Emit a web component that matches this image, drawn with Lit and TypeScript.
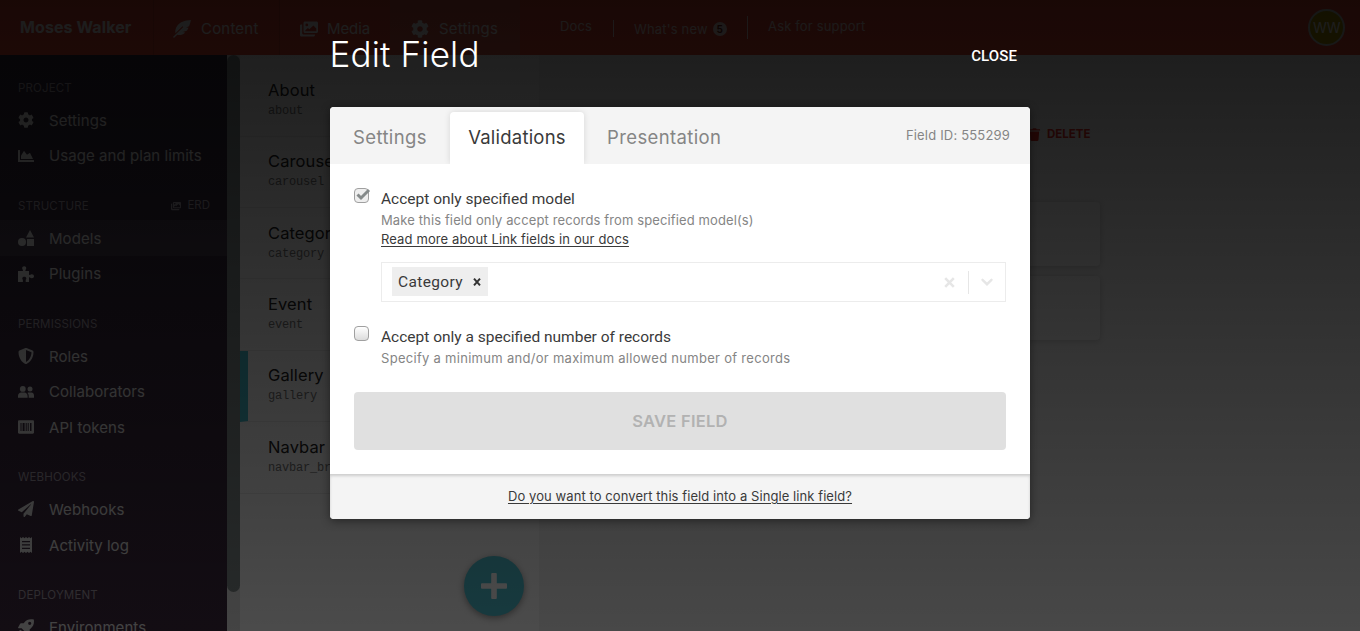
import { LitElement, html, css, svg } from "lit";

const ICONS: Record<string, { box: string; body: unknown }> = {
  cog: {
    box: "0 0 512 512",
    body: svg`<path d="M487.4 315.7l-42.6-24.6c4.3-23.2 4.3-47 0-70.2l42.6-24.6c4.9-2.8 7.1-8.6 5.5-14-11.1-35.6-30-67.8-54.7-94.6-3.8-4.1-10-5.1-14.8-2.3L380.8 110c-17.9-15.4-38.5-27.3-60.8-35.1V25.8c0-5.6-3.9-10.5-9.4-11.7-36.7-8.2-74.3-7.8-109.2 0-5.5 1.2-9.4 6.1-9.4 11.7V75c-22.2 7.9-42.8 19.8-60.8 35.1L88.7 85.5c-4.9-2.8-11-1.9-14.8 2.3-24.7 26.7-43.6 58.9-54.7 94.6-1.7 5.4.6 11.2 5.5 14L67.3 221c-4.3 23.2-4.3 47 0 70.2l-42.6 24.6c-4.9 2.8-7.1 8.6-5.5 14 11.1 35.6 30 67.8 54.7 94.6 3.8 4.1 10 5.1 14.8 2.3l42.6-24.6c17.9 15.4 38.5 27.3 60.8 35.1v49.2c0 5.6 3.9 10.5 9.4 11.7 36.7 8.2 74.3 7.8 109.2 0 5.5-1.2 9.4-6.1 9.4-11.7v-49.2c22.2-7.9 42.8-19.8 60.8-35.1l42.6 24.6c4.9 2.8 11 1.9 14.8-2.3 24.7-26.7 43.6-58.9 54.7-94.6 1.5-5.5-.7-11.3-5.6-14.1zM256 336c-44.1 0-80-35.9-80-80s35.9-80 80-80 80 35.9 80 80-35.9 80-80 80z"/>`,
  },
  plane: {
    box: "0 0 512 512",
    body: svg`<path d="M476 3.2L12.5 270.6c-18.1 10.4-15.8 35.6 2.2 43.2L121 358.4l287.3-253.2c5.5-4.9 13.3 2.6 8.6 8.3L176 407v80.5c0 23.6 28.5 32.9 42.5 15.8L282 426l124.6 52.2c14.2 6 30.4-2.9 33-18.2l72-432C515 7.8 493.3-6.8 476 3.2z"/>`,
  },
  shield: {
    box: "0 0 512 512",
    body: svg`<path d="M466.5 83.7l-192-80a48.15 48.15 0 0 0-36.9 0l-192 80C27.7 91.1 16 108.6 16 128c0 198.5 114.5 335.7 221.5 380.3 11.8 4.9 25.1 4.9 36.9 0C360.1 472.6 496 349.3 496 128c0-19.4-11.7-36.9-29.5-44.3zM256.1 446.3l-.1-381 175.9 73.3c-3.3 151.4-82.1 261.1-175.8 307.7z"/>`,
  },
  chart: {
    box: "0 0 512 512",
    body: svg`<path d="M500 384c6.6 0 12 5.4 12 12v40c0 6.6-5.4 12-12 12H12c-6.6 0-12-5.4-12-12V76c0-6.6 5.4-12 12-12h40c6.6 0 12 5.4 12 12v308h436zM372.7 159.5L288 216l-85.3-113.7c-5.1-6.8-15.5-6.3-19.9 1L96 248v104h384l-89.9-187.8c-3.2-6.5-11.4-8.7-17.4-4.7z"/>`,
  },
  shapes: {
    box: "0 0 16 16",
    body: svg`<path d="M12 0 16 7.5H8zM9 9h7v7H9z"/><circle cx="4" cy="12" r="4"/>`,
  },
  puzzle: {
    box: "0 0 16 16",
    body: svg`<path d="M0 5h4.6c.5 0 .6-.5.3-.9C4.300 3.300 4.200 2.700 4.200 2.200 4.200 1 5 .3 6.200.3S8.200 1 8.200 2.200c0 .5-.1 1.100-.7 1.900-.3.4-.2.9.3.9H11v3.600c0 .5.500.6.9.3.700-.5 1.200-.7 1.900-.7 1.300 0 2.200.8 2.200 2s-.9 2-2.200 2c-.7 0-1.200-.2-1.900-.7-.4-.3-.9-.2-.9.300V16H7.700v-2c0-.5.600-.8.600-1.600 0-1-.8-1.700-2-1.700s-2 .7-2 1.700c0 .8.600 1.100.600 1.600v2H0z"/>`,
  },
  users: {
    box: "0 0 16 16",
    body: svg`<circle cx="4.800" cy="4.900" r="2.900"/><circle cx="12" cy="5" r="2.500"/><path d="M0 13.700v-1.600C0 10 1.500 8.600 3.200 8.600h3.200c1.700 0 3.200 1.400 3.200 3.500v1.600zM10.700 13.700v-1.900c0-1.200-.4-2.200-1.200-2.900.5-.2.900-.3 1.400-.3h2.400c1.600 0 2.700 1.200 2.700 2.800v2.300z"/>`,
  },
  barcode: {
    box: "0 0 16 16",
    body: svg`<path fill-rule="evenodd" d="M1.200 1.300h13.600c.7 0 1.200.5 1.200 1.200v11c0 .7-.5 1.200-1.200 1.200H1.200C.5 14.700 0 14.200 0 13.500v-11c0-.7.5-1.200 1.200-1.200zM2.500 4v8h1V4zM4.600 4v8h2V4zM7.700 4v8h1V4zM9.700 4v8h1V4zM12 4v8h1.500V4z"/>`,
  },
  receipt: {
    box: "0 0 16 16",
    body: svg`<path fill-rule="evenodd" d="M2 0l1.500 1.200L5 0l1.500 1.200L8 0l1.500 1.200L11 0l1.500 1.200L14 0v16l-1.500-1.200L11 16l-1.500-1.200L8 16l-1.500-1.200L5 16l-1.500-1.200L2 16zM4 4v1.300h8V4zM4 7.300v1.300h8V7.300zM4 10.700V12h8v-1.300z"/>`,
  },
  rocket: {
    box: "0 0 16 16",
    body: svg`<path fill-rule="evenodd" d="M15.800.6c-4-.9-7.200-.1-9.500 2.900L5.700 4.300H3c-.4 0-.8.2-1 .6L.1 8.500c-.2.400 0 .8.500.8h3l3.100 3.100v3c0 .5.400.7.8.500l3.600-1.900c.4-.2.6-.6.6-1v-2.700l.8-.6c3-2.300 3.900-5.600 3.300-9.100zM11.700 5.900a1.600 1.600 0 1 1 0-3.200 1.600 1.600 0 0 1 0 3.200zM.2 16c-.3-2.500.5-4.700 2.500-5.200l2.500 2.500C4.700 15.200 2.700 16 .2 16z"/>`,
  },
  images: {
    box: "0 0 18 16",
    body: svg`<path fill-rule="evenodd" d="M5 .6h11.500c.8 0 1.500.7 1.500 1.500v8.400c0 .8-.7 1.500-1.500 1.500H5c-.8 0-1.500-.7-1.500-1.500V2.100C3.500 1.300 4.200.6 5 .6zM6.800 2.500a1.400 1.400 0 1 0 0 2.800 1.400 1.400 0 0 0 0-2.800zM5.300 10.200h11V7.400l-2.900-2.900L9.300 8.300 7.900 7l-2.600 2.300z"/><path d="M0 4.500C0 3.900.6 3.500 1.200 3.500h1v8.600c0 .8.500 1.300 1.200 1.300H15v.7c0 .8-.7 1.500-1.400 1.500H1.700C.7 15.600 0 14.800 0 13.900z"/>`,
  },
  feather: {
    box: "0 0 18 18",
    body: svg`<path d="M17.900.1C12 .2 6.200 2.500 3.800 6.400c-1.400 2.300-1.700 4.700-1.400 6.800L9.500 6.300l.8.700L.2 16.700c-.3.500.4 1.300 1 1l3.100-2.900c2.600.6 5.700-.1 7.900-2.400l-2.400-.5 4-1.100c.8-1 1.300-2 1.700-3l-2.500-.3 3.100-1.300c.9-2 1.500-4.200 1.800-6.100z"/>`,
  },
  trash: {
    box: "0 0 14 14",
    body: svg`<path d="M1 1.300h3.700L5.300.3h3.400l.6 1H13v1.500H1zM2 3.700h10l-.7 9.300c0 .5-.4.900-1 .9H3.700c-.6 0-1-.4-1-.9z"/>`,
  },
};

const icon = (name: string, w: number, h = w) =>
  html`<svg width=${w} height=${h} viewBox=${ICONS[name].box} fill="currentColor">${ICONS[name].body}</svg>`;

const GROUPS = [
  { title: "Project", items: [["cog", "Settings"], ["chart", "Usage and plan limits"]] },
  { title: "Structure", extra: "ERD", items: [["shapes", "Models"], ["puzzle", "Plugins"]] },
  { title: "Permissions", items: [["shield", "Roles"], ["users", "Collaborators"], ["barcode", "API tokens"]] },
  { title: "Webhooks", items: [["plane", "Webhooks"], ["receipt", "Activity log"]] },
  { title: "Deployment", items: [["rocket", "Environments"]] },
];

const MODELS = [
  ["About", "about"],
  ["Carousel", "carousel"],
  ["Category", "category"],
  ["Event", "event"],
  ["Gallery", "gallery"],
  ["Navbar Brand", "navbar_brand"],
];

class TopBar extends LitElement {
  static styles = css`
    :host { display: flex; height: 55px; background: #ec4833; color: #fff; font-size: 15px; letter-spacing: 0.2px; }
    .brand { width: 133px; padding-left: 20px; font-weight: 700; font-size: 16px; letter-spacing: 0.1px; line-height: 55px; }
    .item { display: flex; align-items: center; box-sizing: border-box; padding-top: 2px; box-shadow: inset 1px 0 rgba(0, 0, 0, 0.12); }
    .content { width: 126px; padding-left: 20px; gap: 10px; }
    .media { width: 111px; padding-left: 21px; gap: 9px; letter-spacing: -0.1px; }
    .active { width: 130px; padding-left: 21px; gap: 10px; background: rgba(150, 210, 210, 0.14); box-shadow: none; }
    .links { display: flex; align-items: flex-start; font-size: 13px; letter-spacing: 0.16px; opacity: 0.85; line-height: 16px; }
    .docs { margin: 18px 20px 0 40px; width: 33px; }
    .bar { width: 1px; background: #fff; }
    .b1 { height: 17px; margin-top: 20px; }
    .b2 { height: 23px; margin: 16px 20px 0; }
    .new { display: flex; align-items: center; margin: 21px 0 0 20px; gap: 5px; width: 93px; white-space: nowrap; }
    .badge { width: 14px; height: 14px; border-radius: 50%; background: #fff; color: #5a1a10; font: 700 10px/14px Inter, sans-serif; text-align: center; letter-spacing: 0; }
    .ask { margin-top: 18px; }
    .avatar { margin: 9px 15px 0 auto; width: 37px; height: 37px; box-sizing: border-box; border-radius: 50%; border: 2px solid #c8d0c8; background: #b09a00; text-align: center; line-height: 33px; font-size: 14px; letter-spacing: -0.5px; }
  `;
  render() {
    return html`
      <div class="brand">Moses Walker</div>
      <div class="item content">${icon("feather", 18)}<span>Content</span></div>
      <div class="item media">${icon("images", 18, 16)}<span>Media</span></div>
      <div class="item active">${icon("cog", 18)}<span>Settings</span></div>
      <div class="links">
        <span class="docs">Docs</span><span class="bar b1"></span>
        <span class="new"><span>What's new</span><span class="badge">5</span></span>
        <span class="bar b2"></span><span class="ask">Ask for support</span>
      </div>
      <div class="avatar">WW</div>
    `;
  }
}
customElements.define("top-bar", TopBar);

class SideNav extends LitElement {
  static styles = css`
    :host { display: flex; width: 240px; height: 576px; overflow: hidden; background: linear-gradient(#30273a, #402b41); color: #e4e4e4; font-size: 15px; letter-spacing: 0.06px; }
    .nav { width: 227px; padding-top: 0.9px; }
    .title { display: flex; justify-content: space-between; box-sizing: border-box; height: 46.67px; padding: 25px 17px 0 18px; line-height: 15px; font-size: 11.5px; letter-spacing: 0.15px; text-transform: uppercase; color: #a49ba8; }
    .extra { display: flex; align-items: center; gap: 6px; height: 14px; letter-spacing: 0; }
    .row { display: flex; align-items: center; gap: 15px; height: 35.6px; padding-left: 18px; }
    .on { background: rgba(255, 255, 255, 0.09); }
    .track { width: 13px; background: #e6e6e6; }
    .thumb { height: 537px; border-radius: 7px; background: #858f8f; }
  `;
  render() {
    return html`
      <div class="nav">
        ${GROUPS.map(
          (g) => html`
            <div class="title"><span>${g.title}</span>${g.extra ? html`<span class="extra">${icon("images", 10, 10)}${g.extra}</span>` : ""}</div>
            ${g.items.map(([i, t]) => html`<div class="row ${t === "Models" ? "on" : ""}">${icon(i, 16)}<span>${t}</span></div>`)}
          `
        )}
      </div>
      <div class="track"><div class="thumb"></div></div>
    `;
  }
}
customElements.define("side-nav", SideNav);

class ModelList extends LitElement {
  static styles = css`
    :host { display: block; position: relative; width: 299px; height: 576px; box-sizing: border-box; padding-top: 10.2px; background: #fff; color: #222; }
    .row { box-sizing: border-box; height: 71.4px; padding: 14.6px 0 0 28px; border-bottom: 1px solid #ececec; }
    .on { border-left: 8px solid #45c2d2; padding-left: 20px; }
    .name { font: 16.5px/21px Inter, sans-serif; letter-spacing: 0.1px; }
    .slug { font: 12px/21px "Liberation Mono", monospace; letter-spacing: -0.2px; color: #777; }
    .add { position: absolute; left: 224px; top: 501px; width: 60px; height: 60px; border-radius: 50%; background: #4fc5d6; display: grid; place-items: center; box-shadow: 0 2px 7px rgba(0, 0, 0, 0.4); }
  `;
  render() {
    return html`
      ${MODELS.map(([n, s]) => html`<div class="row ${s === "gallery" ? "on" : ""}"><div class="name">${n}</div><div class="slug">${s}</div></div>`)}
      <div class="add">
        <svg width="26" height="26" viewBox="0 0 26 26" fill="#fff"><rect x="10.200" width="5.600" height="26" rx="1" /><rect y="10.200" width="26" height="5.600" rx="1" /></svg>
      </div>
    `;
  }
}
customElements.define("model-list", ModelList);

class FieldDialog extends LitElement {
  static styles = css`
    :host { display: block; width: 700px; }
    .head { display: flex; justify-content: space-between; align-items: center; box-sizing: border-box; height: 107px; padding: 4px 13px 0 0; color: #fff; }
    .h { font: 300 35px/40px Inter, sans-serif; letter-spacing: 0.15px; margin: -3px 0 0 -0.5px; }
    .close { font: 500 15px/20px Roboto, sans-serif; letter-spacing: 0.1px; }
    .box { height: 412px; border-radius: 4px; overflow: hidden; background: #fff; color: #3a3a3a; box-shadow: 0 2px 10px rgba(0, 0, 0, 0.45); }
    .tabs { display: flex; height: 57px; box-sizing: border-box; padding: 5px 20px 0 23px; background: #f4f4f4; overflow: hidden; font-size: 18.5px; letter-spacing: 0.38px; line-height: 50px; color: #858585; }
    .t1 { width: 97px; }
    .cur { width: 134px; box-sizing: border-box; text-align: center; background: #fff; color: #3a3a3a; border-radius: 4px 4px 0 0; box-shadow: 0 0 6px rgba(0, 0, 0, 0.12); letter-spacing: 0.22px; }
    .t3 { margin-left: 23px; }
    .id { margin-left: auto; font-size: 13px; letter-spacing: 0.18px; line-height: 47px; }
    .body { height: 310px; box-sizing: border-box; padding: 24px 24px 0; }
    .opt { display: flex; gap: 12px; }
    .grow { flex: 1; }
    .check { width: 15px; height: 15px; box-sizing: border-box; border: 1px solid #a0a0a0; border-radius: 4px; background: linear-gradient(#fff, #dcdcdc); }
    .checked { background: #eee; }
    .tick { display: block; margin: -2px 0 0; overflow: visible; }
    .label { font: 15.5px/22px Roboto, sans-serif; letter-spacing: 0; }
    .desc { margin-top: 1px; font-size: 13px; line-height: 19px; letter-spacing: 0.12px; color: #858585; }
    .wide { letter-spacing: 0.29px; }
    .link { font-size: 13px; line-height: 19px; letter-spacing: 0.12px; text-decoration: underline; text-underline-offset: 2px; }
    .select { display: flex; align-items: center; box-sizing: border-box; height: 40px; margin: 13px 0 24px; border: 1px solid #ececec; padding: 0 11px 0 10px; }
    .chip { display: flex; align-items: center; justify-content: space-between; box-sizing: border-box; width: 96px; height: 29px; margin-top: -1px; padding: 1px 7px 0 6px; background: #eee; font: 15.5px/28px Roboto, sans-serif; letter-spacing: 0.35px; }
    .clear { margin-left: auto; margin-right: 13px; }
    .sep { width: 1px; height: 23px; background: #e6e6e6; margin-right: 11px; }
    .save { margin-top: 24px; height: 58px; border-radius: 4px; background: #e0e0e0; color: #b2b2b2; text-align: center; font-weight: 600; font-size: 16.5px; letter-spacing: 0.25px; line-height: 58px; }
    .foot { height: 45px; box-sizing: border-box; background: #f4f4f4; box-shadow: inset 0 2px 3px rgba(0, 0, 0, 0.16); text-align: center; font-size: 13px; letter-spacing: 0.08px; line-height: 45px; text-decoration: underline; text-underline-offset: 2px; }
  `;
  render() {
    return html`
      <div class="head"><span class="h">Edit Field</span><span class="close">CLOSE</span></div>
      <div class="box">
        <div class="tabs"><span class="t1">Settings</span><span class="cur">Validations</span><span class="t3">Presentation</span><span class="id">Field ID: 555299</span></div>
        <div class="body">
          <div class="opt">
            <div class="check checked">
              <svg class="tick" width="16" height="14" viewBox="0 0 16 14"><path d="M2.500 7.500 6 11 14 3" fill="none" stroke="#858a8a" stroke-width="3" /></svg>
            </div>
            <div class="grow">
              <div class="label">Accept only specified model</div>
              <div class="desc">Make this field only accept records from specified model(s)</div>
              <div class="link">Read more about Link fields in our docs</div>
              <div class="select">
                <div class="chip">
                  <span>Category</span>
                  <svg width="8" height="8" viewBox="0 0 8 8" stroke="#333" stroke-width="2"><path d="M1 .7 7 7.300M7 .7 1 7.300" /></svg>
                </div>
                <svg class="clear" width="11" height="11" viewBox="0 0 11 11" stroke="#e6e6e6" stroke-width="2.600"><path d="M1.200 1.200 9.800 9.800M9.800 1.200 1.200 9.800" /></svg>
                <span class="sep"></span>
                <svg width="14" height="8" viewBox="0 0 14 8" fill="none" stroke="#e6e6e6" stroke-width="2.400" stroke-linecap="round"><path d="M2.500 1.800 7 6.200 11.500 1.800" /></svg>
              </div>
            </div>
          </div>
          <div class="opt">
            <div class="check"></div>
            <div class="grow">
              <div class="label">Accept only a specified number of records</div>
              <div class="desc wide">Specify a minimum and/or maximum allowed number of records</div>
            </div>
          </div>
          <div class="save">SAVE FIELD</div>
        </div>
        <div class="foot">Do you want to convert this field into a Single link field?</div>
      </div>
    `;
  }
}
customElements.define("field-dialog", FieldDialog);

class AppRoot extends LitElement {
  static styles = css`
    :host { display: block; position: relative; width: 1360px; height: 631px; overflow: hidden; font-family: Inter, sans-serif; background: #f4f4f4; }
    .page { display: flex; }
    .main { flex: 1; padding: 71px 260px 0 0; }
    .tools { display: flex; justify-content: flex-end; align-items: center; gap: 6px; height: 16px; margin-right: 9.5px; color: #e02b20; font-weight: 700; font-size: 11.5px; }
    .card { height: 64px; width: 520px; margin: 0 0 10px auto; border-radius: 4px; background: #fafafa; box-shadow: 0 1px 6px rgba(0, 0, 0, 0.18); }
    .first { margin-top: 60px; }
    .veil { position: absolute; inset: 0; display: flex; justify-content: center; align-items: flex-start; background: linear-gradient(rgba(0, 0, 0, 0.895), rgba(0, 0, 0, 0.705)); }
  `;
  render() {
    return html`
      <top-bar></top-bar>
      <div class="page">
        <side-nav></side-nav>
        <model-list></model-list>
        <div class="main">
          <div class="tools">${icon("trash", 13)}<span>DELETE</span></div>
          <div class="card first"></div>
          <div class="card"></div>
        </div>
      </div>
      <div class="veil"><field-dialog></field-dialog></div>
    `;
  }
}
customElements.define("app-root", AppRoot);
